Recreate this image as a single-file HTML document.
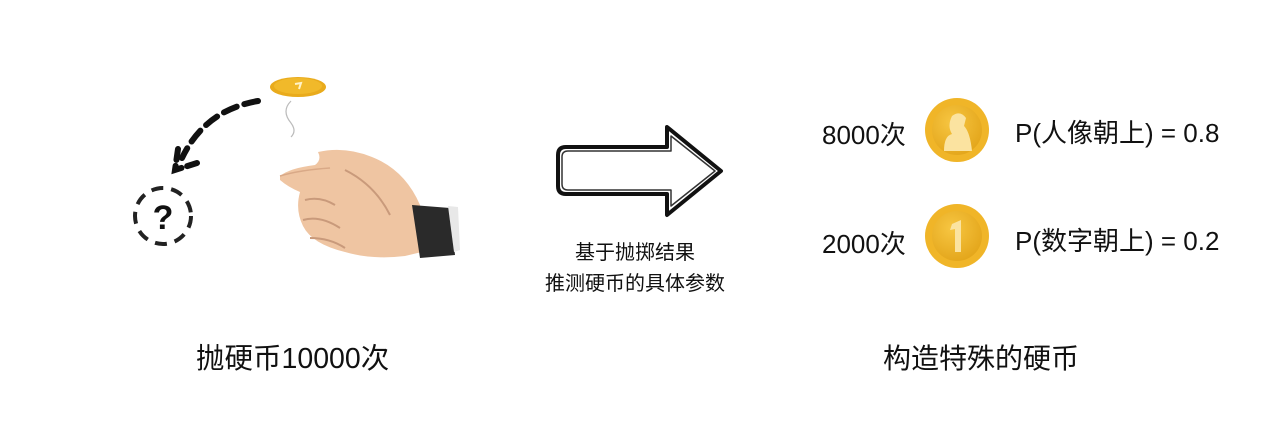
<!DOCTYPE html>
<html><head><meta charset="utf-8"><style>
body{margin:0;width:1280px;height:437px;background:#fff;overflow:hidden;position:relative;font-family:"Liberation Sans","Noto Sans CJK SC",sans-serif;color:#111}
.t{position:absolute;white-space:nowrap}
</style></head><body>
<svg width="1280" height="437" style="position:absolute;left:0;top:0">
<defs>
<radialGradient id="g" cx="40%" cy="35%" r="70%"><stop offset="0" stop-color="#f7c642"/><stop offset="1" stop-color="#e3a51a"/></radialGradient>
</defs>
<ellipse cx="298" cy="87" rx="28" ry="10" fill="#e9ab1c"/>
<ellipse cx="298" cy="86" rx="24" ry="8" fill="#f1b92a"/>
<path d="M295 84 l6 -1 l-2 6" stroke="#fff3c8" stroke-width="2" fill="none"/>
<path d="M291 101 q-10 10 0 22 q6 8 0 14" stroke="#bbb" stroke-width="1.2" fill="none"/>
<path d="M258 101 Q205 110 182 158" stroke="#111" stroke-width="6" fill="none" stroke-dasharray="14 8" stroke-linecap="round"/>
<path d="M178 149 L175 170 L197 163" stroke="#111" stroke-width="6" fill="none" stroke-dasharray="11 6" stroke-linecap="round"/>
<circle cx="163" cy="216" r="28" stroke="#222" stroke-width="4" fill="none" stroke-dasharray="12 8"/>
<text x="163" y="229" font-size="34" font-weight="bold" text-anchor="middle" font-family="Liberation Sans" fill="#111">?</text>
<path d="M280 176 Q290 168 315 165 Q322 160 318 152 Q345 146 372 157 Q405 170 420 205 L430 250 L405 256 Q372 260 345 252 Q312 244 303 226 Q295 210 300 192 Q288 187 280 180 Z" fill="#efc5a2"/>
<path d="M280 176 Q300 170 330 168" stroke="#d9a987" stroke-width="1.5" fill="none"/>
<path d="M305 200 Q320 196 335 205 M303 220 Q320 215 340 228 M310 238 Q330 238 345 248 M345 170 Q375 185 390 215" stroke="#c99a7b" stroke-width="2" fill="none"/>
<path d="M412 205 L450 208 L455 255 L420 258 Z" fill="#2a2a2a"/>
<path d="M448 206 L458 207 L460 250 L454 252 Z" fill="#e8e8e8"/>
<path d="M566 147 L667 147 L667 127 L721 171 L667 215 L667 194 L566 194 Q558 194 558 186 L558 155 Q558 147 566 147 Z" fill="#fff" stroke="#111" stroke-width="4" stroke-linejoin="round"/>
<path d="M568 151 L671 151 L671 136 L715 171 L671 206 L671 190 L568 190 Q562 190 562 184 L562 157 Q562 151 568 151 Z" fill="none" stroke="#333" stroke-width="1.5" stroke-linejoin="round"/>
<circle cx="957" cy="130" r="32" fill="#f0b528"/>
<circle cx="957" cy="130" r="25" fill="url(#g)"/>
<path d="M944 151 Q944 136 952 134 Q947 126 952 116 Q960 110 966 118 L964 126 Q970 132 972 151 Z" fill="#fbe3a0"/>
<circle cx="957" cy="236" r="32" fill="#f0b528"/>
<circle cx="957" cy="236" r="25" fill="url(#g)"/>
<path d="M952 224 L961 220 L961 252 L955 252 L955 229 L950 230 Z" fill="#fbe3a0"/>
</svg>
<div class="t" style="left:822px;top:115px;font-size:26px">8000次</div>
<div class="t" style="left:1015px;top:113px;font-size:26px">P(人像朝上) = 0.8</div>
<div class="t" style="left:822px;top:224px;font-size:26px">2000次</div>
<div class="t" style="left:1015px;top:221px;font-size:26px">P(数字朝上) = 0.2</div>
<div class="t" style="left:535px;top:238px;font-size:20px;width:200px;text-align:center;line-height:31px">基于抛掷结果<br>推测硬币的具体参数</div>
<div class="t" style="left:196px;top:336px;font-size:28.5px">抛硬币10000次</div>
<div class="t" style="left:883px;top:337px;font-size:28px">构造特殊的硬币</div>
</body></html>
